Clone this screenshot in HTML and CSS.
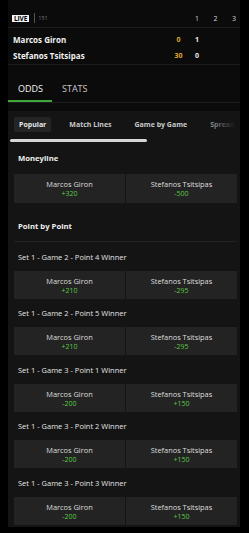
FILE: index.html
```html
<!DOCTYPE html>
<html>
<head>
<meta charset="utf-8">
<link rel="stylesheet" href="styles.css">
</head>
<body>
<div class="app">
  <div class="score-head">
    <div class="live-wrap">
      <span class="live">LIVE</span>
      <span class="sep"></span>
      <span class="eid">151</span>
    </div>
    <div class="cols"><span>1</span><span>2</span><span>3</span></div>
  </div>
  <div class="players">
    <div class="prow">
      <span class="pname">Marcos Giron</span>
      <div class="pscores"><span class="pts">0</span><span class="set">1</span><span class="set"></span><span class="set"></span></div>
    </div>
    <div class="prow">
      <span class="pname">Stefanos Tsitsipas</span>
      <div class="pscores"><span class="pts">30</span><span class="set">0</span><span class="set"></span><span class="set"></span></div>
    </div>
  </div>
  <div class="tabs">
    <span class="tab active">ODDS</span>
    <span class="tab">STATS</span>
  </div>
  <div class="panel">
    <div class="pills">
      <span class="pill active">Popular</span>
      <span class="pill">Match Lines</span>
      <span class="pill">Game by Game</span>
      <span class="pill">Spreads</span>
    </div>
    <div class="scrollbar"></div>

    <div class="group-title">Moneyline</div>
    <div class="market first">
      <div class="cards">
        <div class="card"><span class="nm">Marcos Giron</span><span class="odd">+320</span></div>
        <div class="card"><span class="nm">Stefanos Tsitsipas</span><span class="odd">-500</span></div>
      </div>
    </div>

    <div class="group-title pbp">Point by Point</div>
    <div class="divider"></div>

    <div class="market">
      <div class="mtitle">Set 1 - Game 2 - Point 4 Winner</div>
      <div class="cards">
        <div class="card"><span class="nm">Marcos Giron</span><span class="odd">+210</span></div>
        <div class="card"><span class="nm">Stefanos Tsitsipas</span><span class="odd">-295</span></div>
      </div>
    </div>
    <div class="market">
      <div class="mtitle">Set 1 - Game 2 - Point 5 Winner</div>
      <div class="cards">
        <div class="card"><span class="nm">Marcos Giron</span><span class="odd">+210</span></div>
        <div class="card"><span class="nm">Stefanos Tsitsipas</span><span class="odd">-295</span></div>
      </div>
    </div>
    <div class="market">
      <div class="mtitle">Set 1 - Game 3 - Point 1 Winner</div>
      <div class="cards">
        <div class="card"><span class="nm">Marcos Giron</span><span class="odd">-200</span></div>
        <div class="card"><span class="nm">Stefanos Tsitsipas</span><span class="odd">+150</span></div>
      </div>
    </div>
    <div class="market">
      <div class="mtitle">Set 1 - Game 3 - Point 2 Winner</div>
      <div class="cards">
        <div class="card"><span class="nm">Marcos Giron</span><span class="odd">-200</span></div>
        <div class="card"><span class="nm">Stefanos Tsitsipas</span><span class="odd">+150</span></div>
      </div>
    </div>
    <div class="market last">
      <div class="mtitle">Set 1 - Game 3 - Point 3 Winner</div>
      <div class="cards">
        <div class="card"><span class="nm">Marcos Giron</span><span class="odd">-200</span></div>
        <div class="card"><span class="nm">Stefanos Tsitsipas</span><span class="odd">+150</span></div>
      </div>
    </div>
  </div>
</div>
</body>
</html>
```

FILE: styles.css
```css
html, body {
  margin: 0;
  padding: 0;
  background: #000;
}
body {
  font-family: "Open Sans", "Liberation Sans", sans-serif;
  color: #e6e6e6;
  height: 533px;
  overflow: hidden;
}
.app {
  width: 232px;
  margin-left: 8px;
  background: #0b0b0b;
}
.score-head {
  display: flex;
  justify-content: space-between;
  align-items: center;
  height: 18px;
  padding-top: 9px;
  border-bottom: 1px solid #1c1c1c;
}
.live-wrap {
  display: flex;
  align-items: center;
  padding-left: 4px;
}
.live {
  background: #f2f2f2;
  color: #000;
  font-size: 6.5px;
  font-weight: 700;
  line-height: 7px;
  padding: 0 2px;
  height: 7px;
  letter-spacing: -0.1px;
}
.sep {
  width: 1px;
  height: 10px;
  background: #555;
  margin-left: 5px;
}
.eid {
  font-size: 5.5px;
  color: #777;
  margin-left: 3px;
}
.cols {
  display: flex;
  gap: 6.5px;
}
.cols span {
  width: 12px;
  text-align: center;
  font-size: 7px;
  color: #d4d4d4;
}
.players {
  padding: 3px 0 1px;
  border-bottom: 1px solid #1c1c1c;
}
.prow {
  display: flex;
  justify-content: space-between;
  align-items: center;
  height: 16px;
}
.pname {
  padding-left: 5px;
  font-size: 8px;
  font-weight: 700;
  color: #f2f2f2;
}
.pscores {
  display: flex;
  gap: 6.5px;
}
.pscores span {
  width: 12px;
  text-align: center;
  font-size: 7px;
  font-weight: 700;
}
.pscores .pts {
  color: #e0aa2e;
}
.pscores .set {
  color: #ececec;
}
.tabs {
  display: flex;
  height: 37px;
  border-bottom: 1px solid #1e1e1e;
}
.tab {
  font-size: 9px;
  line-height: 12px;
  padding: 18px 10px 5px;
  color: #c8c8c8;
  box-sizing: border-box;
  height: 37px;
}
.tab.active {
  color: #f4f4f4;
  border-bottom: 2px solid #3fa63a;
  padding-left: 10px;
  padding-right: 9px;
}
.panel {
  margin-top: 8px;
  background: #141414;
  padding: 6px 3px 1px 6px;
}
.pills {
  display: flex;
  gap: 13px;
  white-space: nowrap;
  overflow: hidden;
  position: relative;
}
.pills::after {
  content: "";
  position: absolute;
  right: 0;
  top: 0;
  width: 30px;
  height: 100%;
  background: linear-gradient(to right, rgba(20,20,20,0.2), #141414 95%);
}
.pill {
  font-size: 7px;
  font-weight: 700;
  color: #c9c9c9;
  height: 15px;
  line-height: 15px;
  padding: 0 5px;
  border-radius: 2px;
  flex-shrink: 0;
}
.pill.active {
  background: #242424;
  color: #e8e8e8;
}
.scrollbar {
  margin: 7px 0 0 -4px;
  width: 137px;
  height: 3px;
  border-radius: 2px;
  background: #d6d6d6;
}
.group-title {
  font-size: 7.7px;
  font-weight: 700;
  color: #ededed;
  line-height: 12px;
  padding-left: 4px;
  margin-top: 10px;
}
.group-title.pbp {
  margin-top: 8px;
}
.divider {
  height: 1px;
  background: #222;
  margin: 9px 0 0 0;
}
.market {
  padding-bottom: 8.5px;
}
.market.first {
  margin-top: 10px;
}
.market.last {
  padding-bottom: 1px;
}
.divider + .market {
  margin-top: 9px;
}
.mtitle {
  font-size: 7.5px;
  font-weight: 500;
  color: #e4e4e4;
  line-height: 12px;
  padding-left: 4px;
  margin-bottom: 8px;
}
.cards {
  display: grid;
  grid-template-columns: 1fr 1fr;
  gap: 1px;
}
.card {
  background: #232323;
  height: 28px;
  display: flex;
  flex-direction: column;
  align-items: center;
  padding-top: 5px;
  box-sizing: border-box;
}
.market.first .card {
  height: 29px;
}
.nm {
  font-size: 7.4px;
  line-height: 10px;
  color: #dedede;
}
.odd {
  font-size: 7px;
  line-height: 10px;
  color: #5ac846;
  font-weight: 500;
}
```
